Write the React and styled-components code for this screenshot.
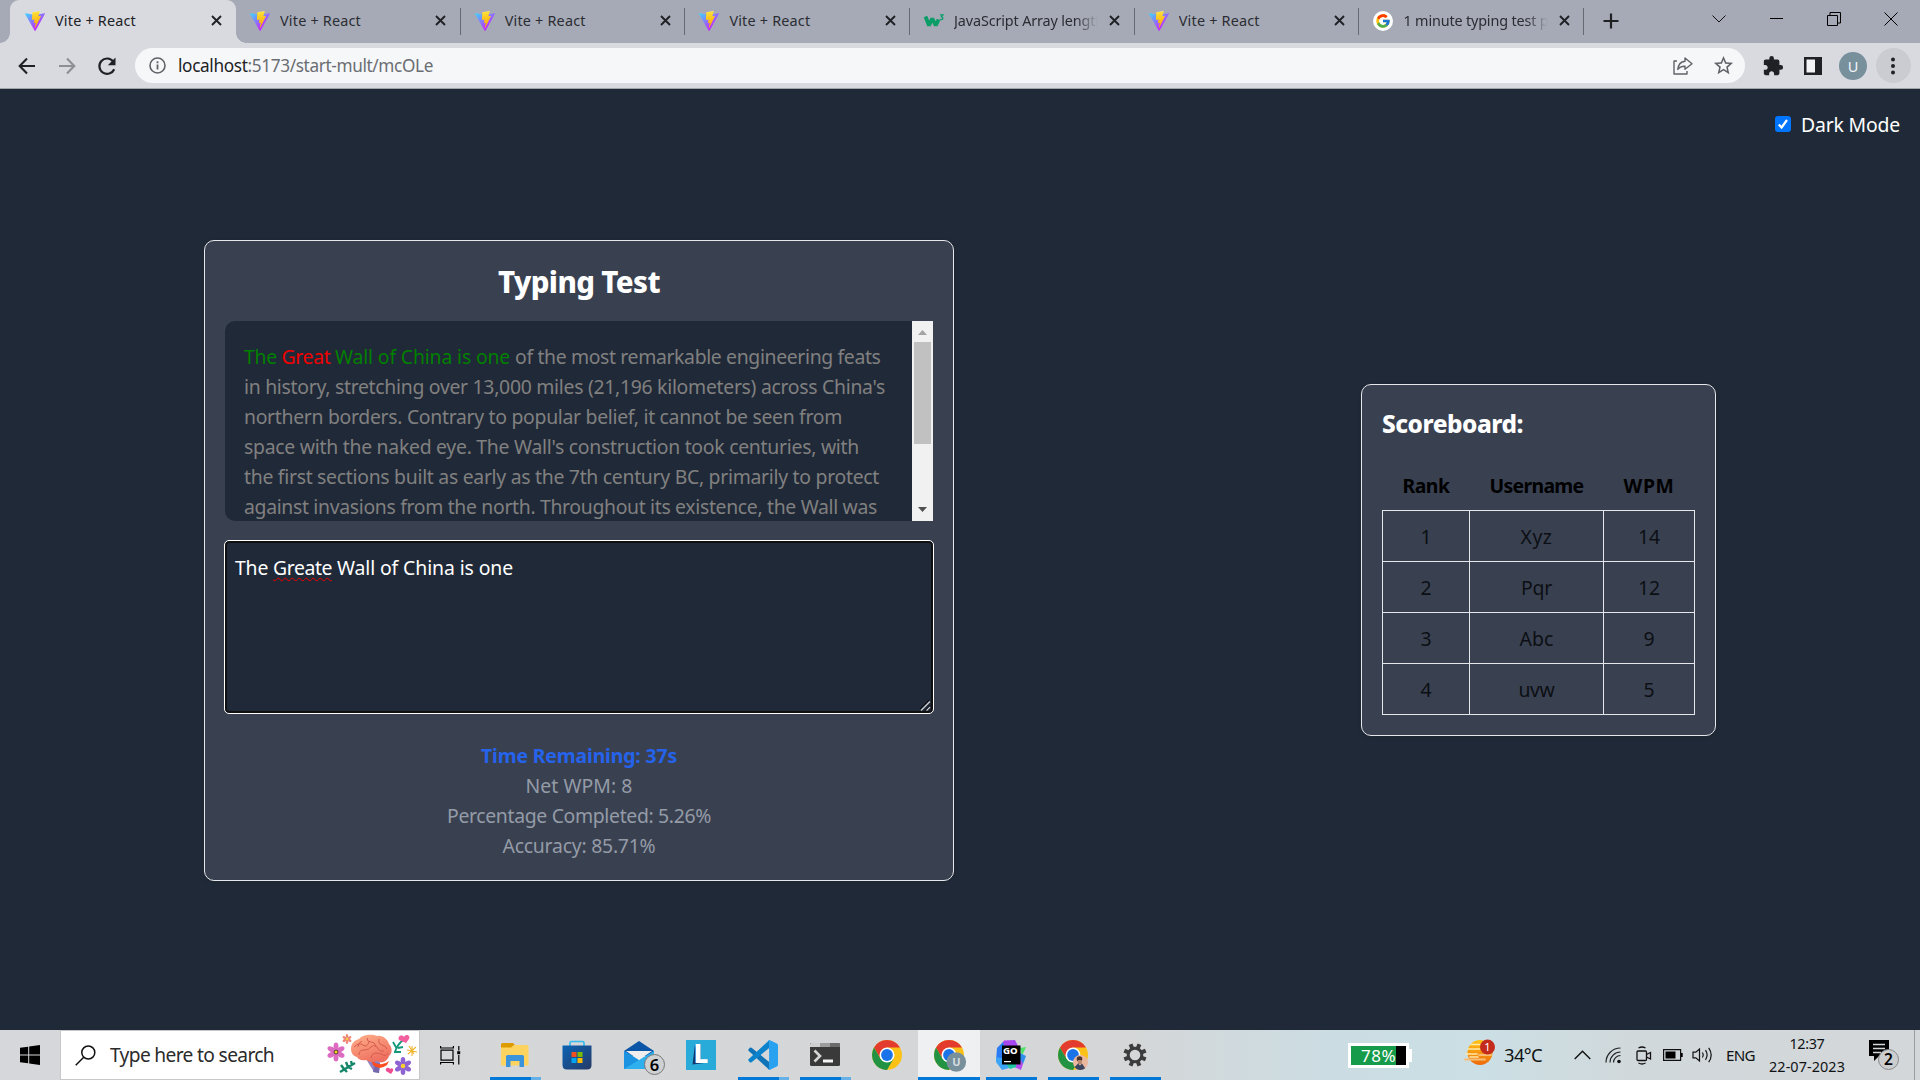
import React, { useLayoutEffect, useRef } from "react";
import styled, { createGlobalStyle, css } from "styled-components";
import { FcGoogle } from "react-icons/fc";
import { MdExtension, MdStarBorder } from "react-icons/md";

const GlobalStyle = createGlobalStyle`
  *, *::before, *::after { box-sizing: border-box; }
  body {
    margin: 0;
    overflow: hidden;
    background: #202937;
    font-family: "Noto Sans", "Open Sans", sans-serif;
  }
  svg { display: block; flex: none; overflow: visible; }
`;

/* ---------- text that tracks to a fixed measure ---------- */

const FitSpan = styled.span`
  display: inline-block;
  white-space: pre;
`;

function Fit({ w, children, ...rest }) {
  const ref = useRef(null);
  useLayoutEffect(() => {
    const el = ref.current;
    el.style.width = "auto";
    el.style.letterSpacing = "0px";
    const natural = el.getBoundingClientRect().width;
    const count = el.textContent.length;
    el.style.letterSpacing = `${((w - natural) / count).toFixed(3)}px`;
    el.style.width = `${w}px`;
  }, [w, children]);
  return <FitSpan ref={ref} {...rest}>{children}</FitSpan>;
}

/* ---------- shell ---------- */

const Screen = styled.div`
  width: 1920px;
  height: 1080px;
  display: flex;
  flex-direction: column;
  overflow: hidden;
  background: #202937;
`;

/* ---------- tab strip ---------- */

const TabStrip = styled.div`
  height: 43px;
  flex: none;
  display: flex;
  padding-left: 10px;
  background: #a6aab6;
`;

const Tab = styled.div`
  position: relative;
  flex: none;
  width: ${(p) => (p.$active ? 226 : 224.7)}px;
  height: 43px;
  display: flex;
  align-items: center;
  padding: 0 14.5px 2px ${(p) => (p.$active ? 15 : 14)}px;
  color: #2b2d33;
  font-size: 14.4px;
  ${(p) =>
    p.$active &&
    css`
      background: #d9dae0;
      border-radius: 9px 9px 0 0;
      color: #202124;
      &::before,
      &::after {
        content: "";
        position: absolute;
        bottom: 0;
        width: 10px;
        height: 10px;
      }
      &::before {
        left: -10px;
        background: radial-gradient(circle at 0 0, transparent 9.5px, #d9dae0 10px);
      }
      &::after {
        right: -10px;
        background: radial-gradient(circle at 100% 0, transparent 9.5px, #d9dae0 10px);
      }
    `}
  ${(p) =>
    p.$divider &&
    css`
      border-right: 1px solid transparent;
      border-image: linear-gradient(transparent 9px, #666a73 9px, #666a73 34px, transparent 34px) 1;
      padding-right: 13.5px;
    `}
`;

const TabTitle = styled.div`
  flex: 1;
  height: 22px;
  line-height: 22px;
  margin: 0 11px 0 10px;
  overflow: hidden;
  white-space: nowrap;
  ${(p) =>
    p.$fade &&
    css`
      mask-image: linear-gradient(90deg, #000 calc(100% - 22px), transparent);
    `}
`;

const NewTab = styled.div`
  width: 54px;
  padding-bottom: 1px;
  display: flex;
  align-items: center;
  justify-content: center;
`;

const WindowButtons = styled.div`
  margin-left: auto;
  display: flex;
  height: 37px;
`;

const WindowButton = styled.div`
  width: 57.3px;
  display: flex;
  align-items: center;
  justify-content: center;
`;

/* ---------- toolbar ---------- */

const Toolbar = styled.div`
  height: 46px;
  flex: none;
  display: flex;
  align-items: center;
  padding-left: 7px;
  background: #d9dae0;
  border-bottom: 1px solid #a3a5ab;
`;

const ToolButton = styled.div`
  flex: none;
  width: 40px;
  height: 35px;
  display: flex;
  align-items: center;
  justify-content: center;
`;

const Omnibox = styled.div`
  flex: none;
  width: 1610px;
  height: 35px;
  margin-left: 8px;
  margin-right: 8px;
  border-radius: 18px;
  display: flex;
  align-items: center;
  padding: 0 2px 0 14px;
  background: #f6f7f9;
  font-size: 17.2px;
  color: #6a6d72;
`;

const Url = styled.div`
  margin-left: 12px;
  flex: 1;
  white-space: nowrap;
  line-height: 24px;
`;

const Host = styled.span`
  color: #202124;
`;

const BoxIcon = styled.div`
  width: 40px;
  display: flex;
  justify-content: center;
`;

const Avatar = styled.div`
  width: 28px;
  height: 28px;
  border-radius: 50%;
  background: #78909c;
  color: #f2f6f8;
  font-size: 14.5px;
  display: flex;
  align-items: center;
  justify-content: center;
`;

const MenuCircle = styled.div`
  width: 35px;
  height: 35px;
  border-radius: 50%;
  background: #cbccd1;
  display: flex;
  align-items: center;
  justify-content: center;
`;

/* ---------- page ---------- */

const Page = styled.main`
  flex: 1;
  display: flex;
  flex-direction: column;
  background: #202937;
  font-size: 19.4px;
`;

const ModeRow = styled.label`
  height: 151px;
  display: flex;
  align-items: flex-start;
  justify-content: flex-end;
  padding: 21px 20px 0 0;
  color: #fff;
  line-height: 30px;
`;

const CheckBox = styled.span`
  width: 16px;
  height: 16px;
  margin: 6px 10px 0 0;
  border-radius: 3px;
  background: #0075ff;
  display: flex;
  align-items: center;
  justify-content: center;
`;

const Columns = styled.div`
  display: flex;
  align-items: flex-start;
  padding-left: 204px;
  gap: 407px;
`;

const Card = styled.section`
  width: ${(p) => p.$w}px;
  height: ${(p) => p.$h}px;
  margin-top: ${(p) => p.$top || 0}px;
  padding: 20px;
  border: 1px solid #e5e7eb;
  border-radius: 10px;
  background: #394151;
  box-shadow: 0 1px 4px rgba(0, 0, 0, 0.12);
`;

const CardTitle = styled.h1`
  margin: 0 0 19px;
  padding-top: 1px;
  font-size: 29.4px;
  line-height: 40px;
  font-weight: 800;
  text-align: center;
  color: #fff;
`;

const Passage = styled.div`
  height: 200px;
  display: flex;
  border-radius: 10px 0 0 10px;
  background: #202937;
  overflow: hidden;
`;

const PassageText = styled.div`
  flex: 1;
  padding: 21px 0 0 19px;
  color: #808080;
  line-height: 30px;
`;

const Line = styled.div`
  height: 30px;
  white-space: nowrap;
`;

const Good = styled.span`
  color: #008000;
`;

const Bad = styled.span`
  color: #f00000;
`;

const ScrollTrack = styled.div`
  width: 21px;
  display: flex;
  flex-direction: column;
  align-items: center;
  background: #f1f1f1;
`;

const ScrollArrow = styled.div`
  height: 21px;
  padding-top: ${(p) => (p.$end ? 0 : 2)}px;
  padding-bottom: ${(p) => (p.$end ? 2 : 0)}px;
  display: flex;
  align-items: center;
  justify-content: center;
  margin-top: ${(p) => (p.$end ? "auto" : 0)};
`;

const ScrollThumb = styled.div`
  width: 17px;
  height: 102px;
  background: #c1c1c1;
`;

const Editor = styled.div`
  position: relative;
  width: 710px;
  height: 174px;
  margin: 19px 0 27px -1px;
  padding: 12px 10px;
  border: 1px solid #fff;
  border-radius: 5px;
  box-shadow: inset 0 0 0 2px #101010;
  background: #202937;
  color: #fff;
  line-height: 30px;
  white-space: nowrap;
`;

const Misspelled = styled(Fit)`
  text-decoration: underline wavy #f00000 1px;
  text-underline-offset: 2px;
  text-decoration-skip-ink: none;
`;

const Grip = styled.span`
  position: absolute;
  right: 2px;
  bottom: 2px;
`;

const Stat = styled.div`
  height: 30px;
  line-height: 30px;
  text-align: center;
  color: ${(p) => (p.$accent ? "#2563eb" : "#949ba7")};
  font-weight: ${(p) => (p.$accent ? 700 : 400)};
`;

const BoardTitle = styled.h2`
  margin: 0 0 19px;
  padding-top: 1px;
  font-size: 24.4px;
  line-height: 35px;
  font-weight: 800;
  color: #fff;
`;

const Table = styled.table`
  width: 312px;
  border-collapse: collapse;
  table-layout: fixed;
  color: #0c0f13;
  text-align: center;
`;

const Th = styled.th`
  width: ${(p) => p.$w}px;
  height: 50px;
  padding: 2px 0 0;
  color: #000;
  font-weight: 700;
`;

const Td = styled.td`
  height: 51px;
  padding: 2px 0 0;
  border: 1px solid #e5e7eb;
`;

/* ---------- taskbar ---------- */

const Taskbar = styled.footer`
  height: 50px;
  flex: none;
  display: flex;
  background: linear-gradient(90deg, #d6d7da 0, #d5d6d7 1120px, #cbdde3 1340px, #cbdfe4 1480px, #d1d8db 1640px, #d4d7d9 1920px);
  color: #101214;
`;

const StartButton = styled.div`
  flex: none;
  width: 60px;
  display: flex;
  align-items: center;
  justify-content: center;
`;

const SearchBox = styled.div`
  flex: none;
  width: 360px;
  height: 50px;
  display: flex;
  align-items: center;
  padding: 0 0 0 14px;
  border: 1px solid #c6c7c9;
  background: #fff;
  font-size: 19.2px;
  color: #2b2b2b;
`;

const SearchLabel = styled.div`
  margin-left: 14px;
  flex: 1;
  white-space: nowrap;
  line-height: 26px;
  padding-bottom: 1px;
`;

const TaskView = styled.div`
  flex: none;
  width: 64px;
  padding-left: 20px;
  display: flex;
  align-items: center;
`;

const AppButton = styled.div`
  flex: none;
  width: 62px;
  height: 50px;
  display: flex;
  flex-direction: column;
  align-items: center;
  background: ${(p) => (p.$active ? "#eff0f1" : "transparent")};
`;

const AppIcon = styled.div`
  height: 47px;
  padding-top: 2px;
  display: flex;
  align-items: center;
  justify-content: center;
`;

const Underline = styled.div`
  width: ${(p) => (p.$active ? 62 : 51)}px;
  height: 3px;
  background: ${(p) =>
    p.$kind === "none"
      ? "transparent"
      : p.$kind === "stack"
        ? "linear-gradient(90deg, #0078d7 41px, #67b0e8 0)"
        : "#0078d7"};
`;

const Tray = styled.div`
  flex: 1;
  display: flex;
  align-items: center;
  padding-left: 182px;
`;

const BatteryMeter = styled.div`
  flex: none;
  width: 61px;
  height: 25px;
  border: 3px solid #fff;
  display: flex;
  background: #000;
`;

const BatteryFill = styled.div`
  width: 45px;
  height: 19px;
  background: #169b4b;
  color: #fff;
  font-size: 17px;
  line-height: 19px;
  padding-left: 10px;
  white-space: nowrap;
`;

const BatteryNub = styled.div`
  flex: none;
  width: 3px;
  height: 13px;
  background: #fff;
`;

const Weather = styled.div`
  flex: none;
  margin-left: 53px;
  width: 77px;
  display: flex;
  align-items: center;
  gap: 9px;
  font-size: 18.4px;
  line-height: 26px;
  svg {
    margin-bottom: 5px;
  }
`;

const TrayIcon = styled.div`
  flex: none;
  margin-left: ${(p) => p.$gap}px;
`;

const Language = styled.div`
  flex: none;
  margin-left: 13px;
  width: 30px;
  font-size: 15.2px;
  line-height: 24px;
`;

const Clock = styled.div`
  flex: none;
  width: 92px;
  margin-left: 5px;
  display: flex;
  flex-direction: column;
  align-items: center;
  font-size: 14.4px;
  line-height: 23px;
`;

const Notifications = styled.div`
  flex: none;
  margin-left: 16px;
  width: 45px;
`;

const ShowDesktop = styled.div`
  flex: none;
  width: 6px;
  height: 50px;
  border-left: 1px solid #9a9da0;
`;

/* ---------- drawings ---------- */

const ViteLogo = ({ id }) => (
  <svg width="20" height="20" viewBox="0 0 256 257">
    <defs>
      <linearGradient id={`va${id}`} x1="-.828%" x2="57.636%" y1="7.652%" y2="78.411%">
        <stop offset="0%" stopColor="#41D1FF" />
        <stop offset="100%" stopColor="#BD34FE" />
      </linearGradient>
      <linearGradient id={`vb${id}`} x1="43.376%" x2="50.316%" y1="2.242%" y2="89.03%">
        <stop offset="0%" stopColor="#FFEA83" />
        <stop offset="8.333%" stopColor="#FFDD35" />
        <stop offset="100%" stopColor="#FFA800" />
      </linearGradient>
    </defs>
    <path fill={`url(#va${id})`} d="M255.153 37.938L134.897 252.976c-2.483 4.44-8.862 4.466-11.382.048L.875 37.958c-2.746-4.814 1.371-10.646 6.827-9.67l120.385 21.517a6.537 6.537 0 0 0 2.322-.004l117.867-21.483c5.438-.991 9.574 4.796 6.877 9.62Z" />
    <path fill={`url(#vb${id})`} d="M185.432.063L96.44 17.501a3.268 3.268 0 0 0-2.634 3.014l-5.474 92.456a3.268 3.268 0 0 0 3.997 3.378l24.777-5.718c2.318-.535 4.413 1.507 3.936 3.838l-7.361 36.047c-.495 2.426 1.782 4.5 4.151 3.78l15.304-4.649c2.372-.72 4.652 1.36 4.15 3.788l-11.698 56.621c-.732 3.542 3.979 5.473 5.943 2.437l1.313-2.028l72.516-144.72c1.215-2.423-.88-5.186-3.54-4.672l-25.505 4.922c-2.396.462-4.435-1.77-3.759-4.114l16.646-57.705c.677-2.35-1.37-4.583-3.769-4.113Z" />
  </svg>
);

const W3Logo = () => (
  <svg width="20" height="20" viewBox="0 0 20 20">
    <path d="M1.5 5.5 5 14.5 8.2 7.5 11.8 14.5 14.6 8.5" fill="none" stroke="#0a9d68" strokeWidth="3.8" strokeLinejoin="bevel" />
    <path d="M16 3.8h3l-1.6 2c2.2.2 1.8 3-.2 2.8-.6 0-1-.2-1.3-.6" fill="none" stroke="#0a9d68" strokeWidth="1.2" />
  </svg>
);

const GoogleLogo = () => (
  <svg width="20" height="20" viewBox="0 0 20 20">
    <circle cx="10" cy="10" r="10" fill="#fff" />
    <FcGoogle x="2" y="2" size={16} />
  </svg>
);

const CloseMark = () => (
  <svg width="11" height="11" viewBox="0 0 11 11">
    <path d="M1 1l9 9M10 1l-9 9" stroke="#202124" strokeWidth="1.9" />
  </svg>
);

const Chrome = ({ children }) => (
  <svg width="30" height="30" viewBox="0 0 30 30">
    <circle cx="15" cy="15" r="15" fill="#fbc116" />
    <path d="M2 7.5A15 15 0 0 1 28 7.5L15 7.5 8.5 18.75Z" fill="#e33b2e" />
    <path d="M2.01 7.5A15 15 0 0 0 15 30L21.5 18.75 8.5 18.75Z" fill="#229342" />
    <circle cx="15" cy="15" r="7.5" fill="#fff" />
    <circle cx="15" cy="15" r="5.9" fill="#1a73e8" />
    {children}
  </svg>
);

const ChromeWork = () => (
  <Chrome>
    <circle cx="22.3" cy="22" r="9.8" fill="#78909c" />
    <text x="22.3" y="26" fontSize="11" fontWeight="700" fill="#d5dee2" textAnchor="middle">U</text>
  </Chrome>
);

const ChromePhoto = () => (
  <Chrome>
    <circle cx="22.5" cy="22.5" r="7.5" fill="#ecb79f" />
    <circle cx="21.5" cy="19" r="2.8" fill="#4a342d" />
    <path d="M20 20h3.6v4H20z" fill="#b98770" />
    <path d="M16.6 27.200l3.400-3.700 2 2 2-2 3.200 4.700a7.500 7.500 0 0 1-10.600-1z" fill="#3c4560" />
  </Chrome>
);

const Flower = ({ x, y, r, c, core }) => (
  <g transform={`translate(${x} ${y})`}>
    {[0, 60, 120, 180, 240, 300].map((a) => (
      <ellipse key={a} transform={`rotate(${a})`} cx="0" cy={-r * 0.58} rx={r * 0.26} ry={r * 0.42} fill={c} />
    ))}
    <circle r={r * 0.25} fill={core} />
  </g>
);

const BrainArt = () => (
  <svg width="92" height="46" viewBox="0 0 92 46">
    <defs>
      <linearGradient id="brain" x1="0" y1="0" x2="0.5" y2="1">
        <stop offset="0" stopColor="#ffb08a" />
        <stop offset="1" stopColor="#ee7060" />
      </linearGradient>
    </defs>
    <path d="M39 27l8 13 5 1 1-14z" fill="#9183c4" />
    <path d="M46 40l6 1 1-10-5 1z" fill="#7568ad" />
    <path d="M44 28q10 8 18 1l-2 4q-8 6-14 0z" fill="#fb4d20" />
    <path d="M24 17c0-6 4-9 8-10 4-5 14-5 18-3 6-1 11 4 12 8 4 4 3 10 0 12-2 6-8 8-12 5-4 2-8 1-11-1-5 1-8-1-9-3-4-1-6-4-6-8z" fill="url(#brain)" />
    <path d="M27 15q5-5 9-2t6-3M32 23q0-5 5-5t7-3 6 0M44 26q1-5 5-5t7 2 5-2M40 6q0 4 4 4t5 4M52 7q-1 5 3 6t5 4M35 9q-4 2-4 6M50 15q2 5 7 4" fill="none" stroke="#d65c4e" strokeWidth="1" />
    <Flower x={9} y={20} r={9.5} c="#dd6bc2" core="#4b3b28" />
    <circle cx="9" cy="20" r="1.5" fill="#f9d12c" />
    <Flower x={20} y={7} r={5} c="#f08678" core="#f4ce3e" />
    <Flower x={76} y={34} r={9} c="#8e63d3" core="#f9d12c" />
    <path d="M13 40l15-9M17 37l-3-4M21 35l-2-5M25 33l-1-4M17 37l3 3M21 35l4 2" stroke="#14876a" strokeWidth="2.4" />
    <path d="M68 20q2-7 8-12M70 17l-4-7M71 16l5-1M67 20l7 0" fill="none" stroke="#14987a" strokeWidth="1.8" />
    <path d="M79 11l-7-3c-2-4 3-6 5-3 2-4 7-1 5 2z" fill="#f2609f" />
    <path d="M64 42l-5-3c-1-4 3-4 4-2 2-2 4 0 3 2z" fill="#ef4b90" />
    <path d="M85 14v10M80 18l10 2M81 22l8-7M82 14l5 8" stroke="#efb52e" strokeWidth="1.1" />
  </svg>
);

const TaskViewGlyph = () => (
  <svg width="22" height="22" viewBox="0 0 22 22" fill="none" stroke="#000" strokeWidth="1.2">
    <path d="M1 6.2h12v10h-12zM.6 2v2h12.8V2M.6 20.5v-2h12.8v2M18.8 2v4.5M18.8 11v9.5" />
    <path d="M17.2 7.2h3v3h-3z" fill="#000" stroke="none" />
  </svg>
);

const FolderIcon = () => (
  <svg width="28" height="24" viewBox="0 0 28 24">
    <path d="M0 1.5Q0 0 1.5 0H12l2 2-2 3H0z" fill="#dd9b00" />
    <path d="M0 4.5h10l3-2.500h13.500q1 0 1 1V22.500H0z" fill="#ffd35f" />
    <path d="M5 24V13.500q0-1.500 1.500-1.500h15q1.500 0 1.500 1.500V24h-4.500v-6h-9v6z" fill="#3b93dc" />
  </svg>
);

const StoreIcon = () => (
  <svg width="30" height="30" viewBox="0 0 30 30">
    <defs>
      <linearGradient id="store" x1="0" y1="0" x2="1" y2="1">
        <stop offset="0" stopColor="#0a63b5" />
        <stop offset="1" stopColor="#263a66" />
      </linearGradient>
    </defs>
    <path d="M8 7V3q0-1.500 1.500-1.500h11Q22 1.500 22 3v4" fill="none" stroke="#35bdf0" strokeWidth="1.7" />
    <path d="M.5 5.500h29V25q0 4.500-4.500 4.500H5q-4.500 0-4.500-4.500z" fill="url(#store)" />
    <path d="M9.500 12h5v5h-5z" fill="#f25022" />
    <path d="M15.500 12h5v5h-5z" fill="#7fba00" />
    <path d="M9.500 18h5v5h-5z" fill="#00a4ef" />
    <path d="M15.500 18h5v5h-5z" fill="#ffb900" />
  </svg>
);

const MailIcon = () => (
  <svg width="30" height="28" viewBox="0 0 30 28">
    <path d="M0 10L15 0l15 10v5H0z" fill="#0a55a6" />
    <path d="M0 10l15 9 15-9v18H0z" fill="#2eb0ee" />
    <path d="M0 28l15-9-15-9z" fill="#1b93e0" />
    <path d="M2 10h26L15 19z" fill="#eeeeee" />
    <circle cx="30.500" cy="23.500" r="10" fill="#cfd0d2" stroke="#75777a" strokeWidth="1" />
    <text x="30.500" y="29.500" fontSize="16.500" fontWeight="600" textAnchor="middle" fill="#000">6</text>
  </svg>
);

const LIcon = () => (
  <svg width="30" height="30" viewBox="0 0 30 30">
    <path d="M0 0h30v30H0z" fill="#28abd8" />
    <path d="M9 4L6.500 24.500 22 22.500 12 18z" fill="#12386e" />
    <text x="7.600" y="22.500" fontSize="26" fontWeight="800" fill="#fff">L</text>
  </svg>
);

const CodeIcon = () => (
  <svg width="30" height="30" viewBox="0 0 30 30">
    <path d="M.6 9.200q-.8 1 .2 1.900L21.500 30v-7.800L3.600 7.800q-1-.8-1.800 0z" fill="#0f73b8" />
    <path d="M.6 20.800q-.8-1 .2-1.900L21.500 0v7.800L3.600 22.200q-1 .8-1.800 0z" fill="#0a82cc" />
    <path d="M21.500 0l7.300 3.400Q30 4 30 5.200v19.600q0 1.200-1.200 1.800L21.500 30q-1 0-1.300-.8.9.2.9-1V1.800q0-1.200-.9-1Q20.500 0 21.500 0z" fill="#27a1f0" />
  </svg>
);

const TerminalIcon = () => (
  <svg width="30" height="23" viewBox="0 0 30 23">
    <rect width="30" height="23" rx="1.500" fill="#3a3a3a" />
    <path d="M0 4V1.500Q0 0 1.500 0H10v4z" fill="#cfcfcf" />
    <path d="M10 0h10v4H10z" fill="#9c9c9c" />
    <path d="M20 0h8.500Q30 0 30 1.500V4H20z" fill="#6c6c6c" />
    <path d="M4.500 7.500l5.500 5.500-5.500 5.500" fill="none" stroke="#d5d5d5" strokeWidth="2.600" />
    <path d="M13 16.500h10v3H13z" fill="#f3f3f3" />
  </svg>
);

const GoLandIcon = () => (
  <svg width="30" height="30" viewBox="0 0 30 30">
    <path d="M8 .5L19 0l3 6 2 8-8 8L2 10z" fill="#a647f2" />
    <path d="M1 8l6-6 4 12-2 13-9-6z" fill="#2a7bf4" />
    <path d="M0 17l10 2 3 9-7 2-6-8z" fill="#3da5f5" />
    <path d="M24 8l6-1-4 9z" fill="#4fe36b" />
    <path d="M24 13l6 3-3 8-5 1z" fill="#2f8df0" />
    <path d="M25 20l2 4-2 6-7-3z" fill="#b34df0" />
    <path d="M10 24h10v3l-6 2z" fill="#1bc6a0" />
    <path d="M6 5.500h18.500v19H6z" fill="#000" />
    <text x="7" y="14.300" fontSize="9.600" fontWeight="800" fill="#fff">GO</text>
    <path d="M8 21h7v1.200H8z" fill="#fff" />
  </svg>
);

const GearIcon = () => (
  <svg width="24" height="24" viewBox="-12 -12 24 24">
    <circle r="6.800" fill="none" stroke="#3c3c3c" strokeWidth="3" />
    {[22.5, 67.5, 112.5, 157.5, 202.5, 247.5, 292.5, 337.5].map((a) => (
      <path key={a} transform={`rotate(${a})`} d="M-2-11.600h4V-7h-4z" fill="#3c3c3c" />
    ))}
  </svg>
);

const WeatherIcon = () => (
  <svg width="30" height="27" viewBox="0 0 30 27">
    <defs>
      <linearGradient id="sun" x1="0" y1="0" x2="0" y2="1">
        <stop offset="0" stopColor="#ffc414" />
        <stop offset="1" stopColor="#ee6a0c" />
      </linearGradient>
    </defs>
    <circle cx="15" cy="13.500" r="12.500" fill="url(#sun)" />
    <path d="M6 5.500h9M3 10h12M1 15h11M5 18h8" stroke="#ffe9a8" strokeWidth="1.600" strokeLinecap="round" />
    <path d="M0 20.500h20M14 16h12" stroke="#f7bd75" strokeWidth="1.800" strokeLinecap="round" />
    <circle cx="22.500" cy="8" r="7.500" fill="#c42b1c" />
    <text x="22.500" y="12" fontSize="11" textAnchor="middle" fill="#fff">1</text>
  </svg>
);

const NotificationIcon = () => (
  <svg width="32" height="32" viewBox="0 0 32 32">
    <path d="M0 1h20v16H10l-5 5v-5H0z" fill="#000" />
    <path d="M4 5.500h12M4 9.500h12M4 13.500h8" stroke="#d4d7d9" strokeWidth="1.300" />
    <circle cx="19.500" cy="20.500" r="10" fill="#cbcdcf" stroke="#86888a" strokeWidth="1" />
    <text x="19.500" y="26" fontSize="15.500" fontWeight="600" textAnchor="middle" fill="#000">2</text>
  </svg>
);

/* ---------- data ---------- */

const tabs = [
  { title: "Vite + React", w: 81, active: true },
  { title: "Vite + React", w: 81, divider: true },
  { title: "Vite + React", w: 81, divider: true },
  { title: "Vite + React", w: 81, divider: true },
  { title: "JavaScript Array length", w: 150, icon: <W3Logo />, divider: true, fade: true },
  { title: "Vite + React", w: 81, divider: true },
  { title: "1 minute typing test p", w: 145, icon: <GoogleLogo />, divider: true, fade: true },
];

const passage = [
  ["in history, stretching over 13,000 miles (21,196 kilometers) across China's", 641],
  ["northern borders. Contrary to popular belief, it cannot be seen from", 598],
  ["space with the naked eye. The Wall's construction took centuries, with", 615],
  ["the first sections built as early as the 7th century BC, primarily to protect", 635],
  ["against invasions from the north. Throughout its existence, the Wall was", 633],
];

const scores = [
  ["1", "Xyz", 32, "14", 22],
  ["2", "Pqr", 31, "12", 22],
  ["3", "Abc", 34, "9", 11],
  ["4", "uvw", 36, "5", 11],
];

const apps = [
  { icon: <FolderIcon />, kind: "stack" },
  { icon: <StoreIcon />, kind: "none" },
  { icon: <MailIcon />, kind: "none" },
  { icon: <LIcon />, kind: "none" },
  { icon: <CodeIcon />, kind: "stack" },
  { icon: <TerminalIcon />, kind: "stack" },
  { icon: <Chrome />, kind: "none" },
  { icon: <ChromeWork />, kind: "single", active: true },
  { icon: <GoLandIcon />, kind: "single" },
  { icon: <ChromePhoto />, kind: "single" },
  { icon: <GearIcon />, kind: "single" },
];

/* ---------- sections ---------- */

const BrowserTabs = () => (
  <TabStrip>
    {tabs.map((t, i) => (
      <Tab key={i} $active={t.active} $divider={t.divider}>
        {t.icon || <ViteLogo id={i} />}
        <TabTitle $fade={t.fade}><Fit w={t.w}>{t.title}</Fit></TabTitle>
        <CloseMark />
      </Tab>
    ))}
    <NewTab>
      <svg width="16" height="16" viewBox="0 0 16 16"><path d="M8 .5v15M.5 8h15" stroke="#202124" strokeWidth="2.200" /></svg>
    </NewTab>
    <WindowButtons>
      <WindowButton><svg width="14" height="8" viewBox="0 0 14 8"><path d="M.5.5L7 7 13.500.5" fill="none" stroke="#111" /></svg></WindowButton>
      <WindowButton><svg width="13" height="1"><path d="M0 .5h13" stroke="#000" /></svg></WindowButton>
      <WindowButton><svg width="14" height="14" viewBox="0 0 14 14"><path d="M.5 3.500h10v10H.5zM3 3V.5h10.500v10.500H11" fill="none" stroke="#000" /></svg></WindowButton>
      <WindowButton><svg width="14" height="14" viewBox="0 0 14 14"><path d="M.5.5l13 13M13.500.5l-13 13" stroke="#000" /></svg></WindowButton>
    </WindowButtons>
  </TabStrip>
);

const BrowserToolbar = () => (
  <Toolbar>
    <ToolButton>
      <svg width="18" height="18" viewBox="0 0 18 18" fill="none" stroke="#202124" strokeWidth="2.100"><path d="M17 9H2M9 1.500L1.700 9 9 16.500" /></svg>
    </ToolButton>
    <ToolButton>
      <svg width="18" height="18" viewBox="0 0 18 18" fill="none" stroke="#8d8f94" strokeWidth="2.100"><path d="M1 9h15M9 1.500L16.300 9 9 16.500" /></svg>
    </ToolButton>
    <ToolButton>
      <svg width="20" height="20" viewBox="0 0 20 20"><path d="M17.200 13.200A7.700 7.700 0 1 1 16.200 5.500" fill="none" stroke="#202124" strokeWidth="2.200" /><path d="M18.500 1.500v7.700h-7.700z" fill="#202124" /></svg>
    </ToolButton>
    <Omnibox>
      <svg width="17" height="17" viewBox="0 0 17 17"><circle cx="8.500" cy="8.500" r="7.500" fill="none" stroke="#5f6368" strokeWidth="1.600" /><path d="M8.500 7.500v5M8.500 4.300v1.900" stroke="#5f6368" strokeWidth="1.800" /></svg>
      <Url><Host><Fit w={69.5}>localhost</Fit></Host><Fit w={185.5}>:5173/start-mult/mcOLe</Fit></Url>
      <BoxIcon>
        <svg width="20" height="18" viewBox="0 0 20 18" fill="none" stroke="#5f6368" strokeWidth="1.400"><path d="M4 4H1v13h13v-3M12 1l7 5.700-7 5.500V9.200Q7 9 4.800 12.500 5.500 5 12 4.300z" strokeLinejoin="round" /></svg>
      </BoxIcon>
      <BoxIcon><MdStarBorder size={23} color="#5f6368" /></BoxIcon>
    </Omnibox>
    <ToolButton><MdExtension size={22} color="#202124" /></ToolButton>
    <ToolButton>
      <svg width="18" height="18" viewBox="0 0 18 18"><path d="M0 0h18v18H0z" fill="#202124" /><path d="M2.500 2.500H11v13H2.500z" fill="#f3f3f5" /></svg>
    </ToolButton>
    <ToolButton><Avatar>U</Avatar></ToolButton>
    <ToolButton>
      <MenuCircle>
        <svg width="4" height="18" viewBox="0 0 4 18" fill="#202124"><circle cx="2" cy="2.500" r="2" /><circle cx="2" cy="9" r="2" /><circle cx="2" cy="15.500" r="2" /></svg>
      </MenuCircle>
    </ToolButton>
  </Toolbar>
);

const TypingCard = () => (
  <Card $w={750} $h={641}>
    <CardTitle><Fit w={162}>Typing Test</Fit></CardTitle>
    <Passage>
      <PassageText>
        <Line>
          <Good><Fit w={37.5}>{"The "}</Fit></Good>
          <Bad><Fit w={53.5}>{"Great "}</Fit></Bad>
          <Good><Fit w={180}>{"Wall of China is one "}</Fit></Good>
          <Fit w={365.5}>of the most remarkable engineering feats</Fit>
        </Line>
        {passage.map(([text, w]) => (
          <Line key={text}><Fit w={w}>{text}</Fit></Line>
        ))}
      </PassageText>
      <ScrollTrack>
        <ScrollArrow><svg width="9" height="5" viewBox="0 0 9 5"><path d="M0 5L4.500 0 9 5z" fill="#a3a3a3" /></svg></ScrollArrow>
        <ScrollThumb />
        <ScrollArrow $end><svg width="9" height="5" viewBox="0 0 9 5"><path d="M0 0L4.500 5 9 0z" fill="#505050" /></svg></ScrollArrow>
      </ScrollTrack>
    </Passage>
    <Editor>
      <Fit w={38}>{"The "}</Fit>
      <Misspelled w={59}>Greate</Misspelled>
      <Fit w={181}>{" Wall of China is one"}</Fit>
      <Grip><svg width="11" height="11" viewBox="0 0 11 11"><path d="M1 10.500L10 1.500M6.500 10.500L10 7" stroke="#c8cad0" strokeWidth="1.400" /><path d="M0 9L8.800.2M5 10.500l5-5" stroke="#000" strokeWidth=".8" /></svg></Grip>
    </Editor>
    <Stat $accent><Fit w={196}>Time Remaining: 37s</Fit></Stat>
    <Stat><Fit w={107}>Net WPM: 8</Fit></Stat>
    <Stat><Fit w={264}>Percentage Completed: 5.26%</Fit></Stat>
    <Stat><Fit w={153}>Accuracy: 85.71%</Fit></Stat>
  </Card>
);

const Scoreboard = () => (
  <Card $w={355} $h={352} $top={144}>
    <BoardTitle><Fit w={141}>Scoreboard:</Fit></BoardTitle>
    <Table>
      <thead>
        <tr>
          <Th $w={87}><Fit w={47}>Rank</Fit></Th>
          <Th $w={134}><Fit w={94}>Username</Fit></Th>
          <Th $w={91}><Fit w={51}>WPM</Fit></Th>
        </tr>
      </thead>
      <tbody>
        {scores.map(([rank, name, nw, wpm, ww]) => (
          <tr key={rank}>
            <Td>{rank}</Td>
            <Td><Fit w={nw}>{name}</Fit></Td>
            <Td><Fit w={ww}>{wpm}</Fit></Td>
          </tr>
        ))}
      </tbody>
    </Table>
  </Card>
);

const WindowsTaskbar = () => (
  <Taskbar>
    <StartButton>
      <svg width="20" height="20" viewBox="0 0 20 20"><path d="M0 2.800l8.200-1.100v7.800H0zM9.200 1.500L20 0v9.500H9.200zM0 10.500h8.200v7.800L0 17.200zM9.200 10.500H20V20L9.200 18.500z" fill="#000" /></svg>
    </StartButton>
    <SearchBox>
      <svg width="21" height="21" viewBox="0 0 21 21" fill="none" stroke="#111" strokeWidth="1.500"><circle cx="13.300" cy="7.500" r="6.500" /><path d="M8.700 12.200L.7 20.200" /></svg>
      <SearchLabel><Fit w={164}>Type here to search</Fit></SearchLabel>
      <BrainArt />
    </SearchBox>
    <TaskView><TaskViewGlyph /></TaskView>
    {apps.map((a, i) => (
      <AppButton key={i} $active={a.active}>
        <AppIcon>{a.icon}</AppIcon>
        <Underline $kind={a.kind} $active={a.active} />
      </AppButton>
    ))}
    <Tray>
      <BatteryMeter><BatteryFill><Fit w={35}>78%</Fit></BatteryFill></BatteryMeter>
      <BatteryNub />
      <Weather><WeatherIcon /><Fit w={38}>34°C</Fit></Weather>
      <TrayIcon $gap={31.5}>
        <svg width="17" height="10" viewBox="0 0 17 10"><path d="M.7 9L8.500 1.200 16.300 9" fill="none" stroke="#111" strokeWidth="1.400" /></svg>
      </TrayIcon>
      <TrayIcon $gap={14.5}>
        <svg width="17" height="17" viewBox="0 0 17 17" fill="none" stroke="#222" strokeWidth="1.200"><path d="M1 15.500A14.500 14.500 0 0 1 15.500 1M5 15.500A10.500 10.500 0 0 1 15.500 5M8.500 15.500a7 7 0 0 1 7-7" /><circle cx="14" cy="14.500" r="1.800" fill="#111" stroke="none" /></svg>
      </TrayIcon>
      <TrayIcon $gap={13.5}>
        <svg width="16" height="19" viewBox="0 0 16 19" fill="none" stroke="#111" strokeWidth="1.300"><rect x="1" y="5" width="9.500" height="9.500" rx="1" /><path d="M10.500 8.500l4-2v6.500l-4-2M2.500 2q3.500-2 7 0M2.500 17q3.500 2 7 0" /></svg>
      </TrayIcon>
      <TrayIcon $gap={11.5}>
        <svg width="20" height="12" viewBox="0 0 20 12"><path d="M.6.6h17v10.800H.6z" fill="none" stroke="#111" strokeWidth="1.200" /><path d="M2.500 2.500h10v7h-10zM18 4h1.700v4H18z" fill="#000" /></svg>
      </TrayIcon>
      <TrayIcon $gap={9}>
        <svg width="21" height="18" viewBox="0 0 21 18" fill="none" stroke="#111" strokeWidth="1.200"><path d="M1 6.200h2.800L7.500 3v12l-3.700-3.200H1zM10.500 6.500q1.500 2.500 0 5M13.500 4.200q3.200 4.800 0 9.600M16.700 1.800q5 7.200 0 14.400" /></svg>
      </TrayIcon>
      <Language><Fit w={29}>ENG</Fit></Language>
      <Clock><Fit w={35}>12:37</Fit><Fit w={76}>22-07-2023</Fit></Clock>
      <Notifications><NotificationIcon /></Notifications>
      <ShowDesktop />
    </Tray>
  </Taskbar>
);

export default function App() {
  return (
    <>
      <GlobalStyle />
      <Screen>
        <BrowserTabs />
        <BrowserToolbar />
        <Page>
          <ModeRow>
            <CheckBox>
              <svg width="12" height="12" viewBox="0 0 12 12"><path d="M1.800 6.500l2.800 3L10 2" fill="none" stroke="#fff" strokeWidth="2.200" /></svg>
            </CheckBox>
            <Fit w={99}>Dark Mode</Fit>
          </ModeRow>
          <Columns>
            <TypingCard />
            <Scoreboard />
          </Columns>
        </Page>
        <WindowsTaskbar />
      </Screen>
    </>
  );
}
